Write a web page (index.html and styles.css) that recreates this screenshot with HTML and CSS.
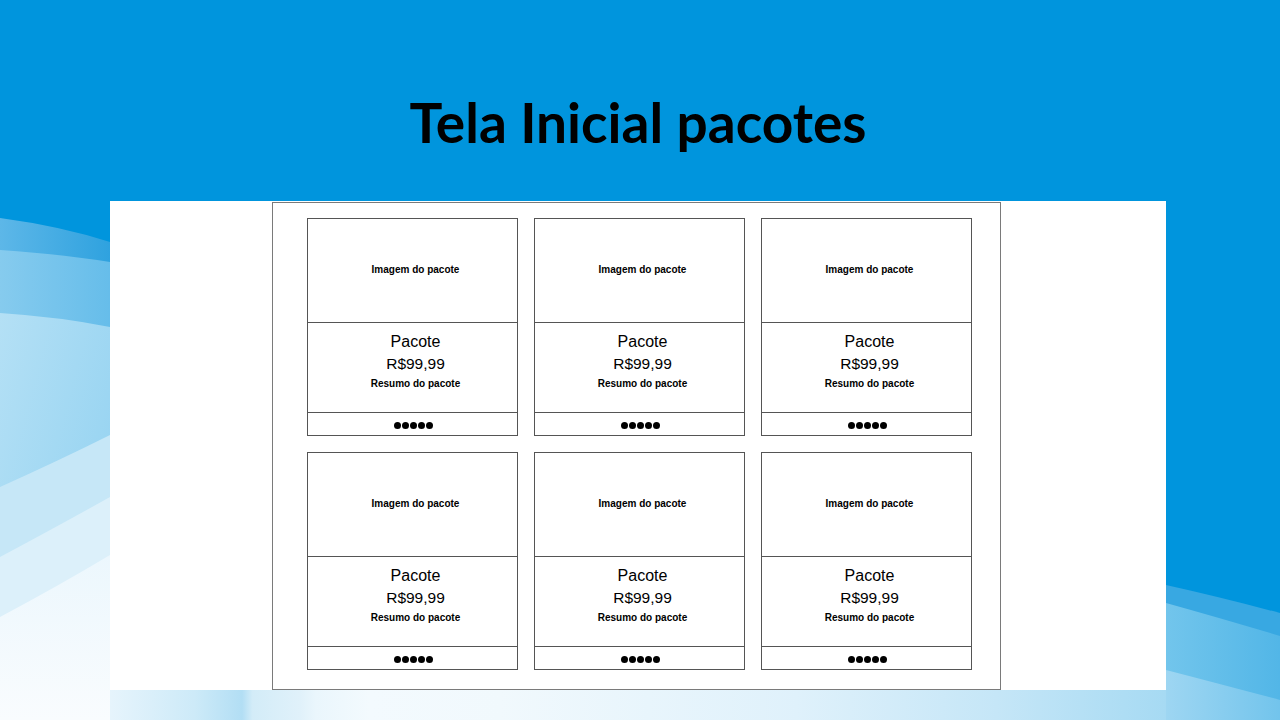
FILE: index.html
```html
<!DOCTYPE html>
<html lang="pt-BR">

<head>
    <meta charset="UTF-8">
    <title>Tela Inicial pacotes</title>
    <link rel="stylesheet" href="styles.css">
</head>

<body>

    <svg class="bg-waves" viewBox="0 0 1280 720" preserveAspectRatio="none" aria-hidden="true">
        <defs>
            <linearGradient id="wl1" x1="0" y1="0" x2="1" y2="0">
                <stop offset="0" stop-color="#5db7e8" />
                <stop offset="1" stop-color="#2fa2df" />
            </linearGradient>
            <linearGradient id="wl2" x1="0" y1="0" x2="1" y2="0">
                <stop offset="0" stop-color="#86cbee" />
                <stop offset="1" stop-color="#66bdea" />
            </linearGradient>
            <linearGradient id="wl3" x1="0" y1="0" x2="1" y2="1">
                <stop offset="0" stop-color="#b4e0f5" />
                <stop offset="1" stop-color="#8ccff0" />
            </linearGradient>
            <linearGradient id="wl6" x1="0" y1="0" x2="0" y2="1">
                <stop offset="0" stop-color="#ecf7fd" />
                <stop offset="1" stop-color="#f9fcfe" />
            </linearGradient>
            <linearGradient id="wr2" x1="0" y1="0" x2="1" y2="0">
                <stop offset="0" stop-color="#72c5ec" />
                <stop offset="1" stop-color="#52b6e7" />
            </linearGradient>
            <linearGradient id="wr3" x1="0" y1="0" x2="1" y2="0">
                <stop offset="0" stop-color="#9ed6f2" />
                <stop offset="1" stop-color="#72c4ec" />
            </linearGradient>
            <linearGradient id="wb" x1="110" y1="0" x2="1166" y2="0" gradientUnits="userSpaceOnUse">
                <stop offset="0" stop-color="#e6f4fc" />
                <stop offset="0.08" stop-color="#cdeaf8" />
                <stop offset="0.125" stop-color="#b2def4" />
                <stop offset="0.135" stop-color="#d3ecf8" />
                <stop offset="0.18" stop-color="#e0f1fa" />
                <stop offset="0.195" stop-color="#eaf6fc" />
                <stop offset="0.246" stop-color="#f3fafe" />
                <stop offset="0.37" stop-color="#f1f9fd" />
                <stop offset="0.65" stop-color="#dff1fb" />
                <stop offset="0.84" stop-color="#c5e6f7" />
                <stop offset="1" stop-color="#a6daf3" />
            </linearGradient>
        </defs>
        <rect width="1280" height="720" fill="#0095dd" />
        <path d="M0,218 Q60,226 110,242 L110,720 L0,720 Z" fill="url(#wl1)" />
        <path d="M0,250 Q60,254 110,262 L110,720 L0,720 Z" fill="url(#wl2)" />
        <path d="M0,313 Q60,317 110,327 L110,720 L0,720 Z" fill="url(#wl3)" />
        <path d="M0,487 Q60,460 110,435 L110,720 L0,720 Z" fill="#c6e7f7" />
        <path d="M0,557 Q60,525 110,497 L110,720 L0,720 Z" fill="#dcf0fa" />
        <path d="M0,617 Q60,585 110,555 L110,720 L0,720 Z" fill="url(#wl6)" />
        <path d="M1166,585 Q1220,597 1280,613 L1280,720 L1166,720 Z" fill="#38a8e2" />
        <path d="M1166,603 Q1220,618 1280,636 L1280,720 L1166,720 Z" fill="url(#wr2)" />
        <path d="M1166,670 Q1220,684 1280,700 L1280,720 L1166,720 Z" fill="url(#wr3)" />
        <rect x="110" y="690" width="1056" height="30" fill="url(#wb)" />
    </svg>

    <div class="slide">
        <header class="slide-header">
            <h1>Tela Inicial pacotes</h1>
        </header>

        <div class="panel">
            <div class="frame">
                <div class="card-grid">

                    <div class="card">
                        <div class="card-image">Imagem do pacote</div>
                        <div class="card-info">
                            <div class="card-title">Pacote</div>
                            <div class="card-price">R$99,99</div>
                            <div class="card-summary">Resumo do pacote</div>
                        </div>
                        <div class="card-rating">
                            <span class="dot"></span><span class="dot"></span><span class="dot"></span><span class="dot"></span><span class="dot"></span>
                        </div>
                    </div>

                    <div class="card">
                        <div class="card-image">Imagem do pacote</div>
                        <div class="card-info">
                            <div class="card-title">Pacote</div>
                            <div class="card-price">R$99,99</div>
                            <div class="card-summary">Resumo do pacote</div>
                        </div>
                        <div class="card-rating">
                            <span class="dot"></span><span class="dot"></span><span class="dot"></span><span class="dot"></span><span class="dot"></span>
                        </div>
                    </div>

                    <div class="card">
                        <div class="card-image">Imagem do pacote</div>
                        <div class="card-info">
                            <div class="card-title">Pacote</div>
                            <div class="card-price">R$99,99</div>
                            <div class="card-summary">Resumo do pacote</div>
                        </div>
                        <div class="card-rating">
                            <span class="dot"></span><span class="dot"></span><span class="dot"></span><span class="dot"></span><span class="dot"></span>
                        </div>
                    </div>

                    <div class="card">
                        <div class="card-image">Imagem do pacote</div>
                        <div class="card-info">
                            <div class="card-title">Pacote</div>
                            <div class="card-price">R$99,99</div>
                            <div class="card-summary">Resumo do pacote</div>
                        </div>
                        <div class="card-rating">
                            <span class="dot"></span><span class="dot"></span><span class="dot"></span><span class="dot"></span><span class="dot"></span>
                        </div>
                    </div>

                    <div class="card">
                        <div class="card-image">Imagem do pacote</div>
                        <div class="card-info">
                            <div class="card-title">Pacote</div>
                            <div class="card-price">R$99,99</div>
                            <div class="card-summary">Resumo do pacote</div>
                        </div>
                        <div class="card-rating">
                            <span class="dot"></span><span class="dot"></span><span class="dot"></span><span class="dot"></span><span class="dot"></span>
                        </div>
                    </div>

                    <div class="card">
                        <div class="card-image">Imagem do pacote</div>
                        <div class="card-info">
                            <div class="card-title">Pacote</div>
                            <div class="card-price">R$99,99</div>
                            <div class="card-summary">Resumo do pacote</div>
                        </div>
                        <div class="card-rating">
                            <span class="dot"></span><span class="dot"></span><span class="dot"></span><span class="dot"></span><span class="dot"></span>
                        </div>
                    </div>

                </div>
            </div>
        </div>
    </div>

</body>

</html>
```

FILE: styles.css
```css
body {
    margin: 0;
    width: 1280px;
    height: 720px;
    overflow: hidden;
    position: relative;
    background: #0095dd;
    font-family: 'Liberation Sans', Arial, sans-serif;
}

.bg-waves {
    position: absolute;
    left: 0;
    top: 0;
    width: 1280px;
    height: 720px;
    z-index: 0;
}

.slide {
    position: relative;
    z-index: 1;
}

.slide-header {
    height: 201px;
    box-sizing: border-box;
    padding-top: 95px;
    text-align: center;
}

h1 {
    margin: 0;
    font-family: 'Lato', 'Open Sans', sans-serif;
    font-weight: 700;
    font-size: 55px;
    line-height: 54px;
    color: #000;
    padding-right: 4px;
}

.panel {
    margin-left: 110px;
    width: 1056px;
    height: 489px;
    box-sizing: border-box;
    padding: 1px 0 0 162px;
    background: #fff;
}

.frame {
    width: 729px;
    height: 488px;
    box-sizing: border-box;
    border: 1px solid #7a7a7a;
    padding: 15px 0 0 34px;
}

.card-grid {
    display: grid;
    grid-template-columns: repeat(3, 211px);
    grid-auto-rows: 218px;
    column-gap: 16px;
    row-gap: 16px;
}

.card {
    border: 1px solid #555;
    display: flex;
    flex-direction: column;
    color: #000;
}

.card-image {
    height: 104px;
    flex-shrink: 0;
    border-bottom: 1px solid #555;
    display: flex;
    align-items: center;
    justify-content: center;
    padding: 0 0 2px 6px;
    box-sizing: border-box;
    font-size: 10px;
    font-weight: 700;
}

.card-info {
    height: 90px;
    flex-shrink: 0;
    border-bottom: 1px solid #555;
    box-sizing: border-box;
    padding: 8px 0 0 6px;
    text-align: center;
}

.card-title {
    font-size: 16px;
    line-height: 22px;
}

.card-price {
    font-size: 15.5px;
    line-height: 22px;
}

.card-summary {
    font-size: 10px;
    font-weight: 700;
    line-height: 18px;
}

.card-rating {
    flex: 1;
    display: flex;
    align-items: center;
    justify-content: center;
    gap: 1px;
    padding: 2px 0 0 2px;
}

.dot {
    width: 7px;
    height: 7px;
    border-radius: 50%;
    background: #000;
}
```
